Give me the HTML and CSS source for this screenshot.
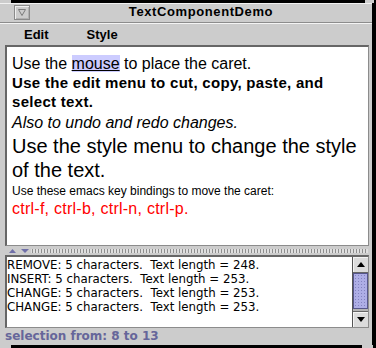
FILE: index.html
```html
<!DOCTYPE html>
<html lang="en">
<head>
    <meta charset="UTF-8">
    <title>TextComponentDemo</title>
    <link rel="stylesheet" href="styles.css">
</head>
<body>
<div class="window">
    <div class="titlebar">
        <div class="close-box">
            <svg width="8" height="7" viewBox="0 0 8 7"><path d="M0.5 0.5 H7.5 L4 6.5 Z" fill="none" stroke="#7a7a7a"/></svg>
        </div>
        <div class="title">TextComponentDemo</div>
    </div>

    <div class="menubar">
        <span class="menu edit">Edit</span>
        <span class="menu style">Style</span>
    </div>

    <div class="editor">
        <div class="line regular">Use the <span class="sel">mouse</span> to place the caret.</div>
        <div class="line bold">Use the edit menu to cut, copy, paste, and</div>
        <div class="line bold">select text.</div>
        <div class="line italic">Also to undo and redo changes.</div>
        <div class="line large">Use the style menu to change the style</div>
        <div class="line large">of the text.</div>
        <div class="line small">Use these emacs key bindings to move the caret:</div>
        <div class="line red">ctrl-f, ctrl-b, ctrl-n, ctrl-p.</div>
    </div>

    <div class="divider">
        <svg class="split-arrows" width="31" height="9" viewBox="0 0 31 9">
            <polygon points="9,7 16,7 12.5,3" fill="#6f6fa8"/>
            <polygon points="21,3 29,3 25,7" fill="#6f6fa8"/>
        </svg>
        <div class="grip"></div>
    </div>

    <div class="log-pane">
        <div class="log">
            <div>REMOVE: 5 characters.&nbsp; Text length = 248.</div>
            <div>INSERT: 5 characters.&nbsp; Text length = 253.</div>
            <div>CHANGE: 5 characters.&nbsp; Text length = 253.</div>
            <div>CHANGE: 5 characters.&nbsp; Text length = 253.</div>
        </div>
        <div class="scrollbar">
            <div class="sb-btn up">
                <svg width="8" height="5" viewBox="0 0 8 5"><polygon points="0,5 8,5 4,0" fill="#000"/></svg>
            </div>
            <div class="sb-thumb"></div>
            <div class="sb-track"></div>
            <div class="sb-btn down">
                <svg width="8" height="5" viewBox="0 0 8 5"><polygon points="0,0 8,0 4,5" fill="#000"/></svg>
            </div>
        </div>
    </div>

    <div class="status">selection from: 8 to 13</div>

    <div class="corner tl"></div>
    <div class="corner tr"></div>
    <div class="corner bl"></div>
    <div class="corner br"></div>
</div>
</body>
</html>
```

FILE: styles.css
```css
* {
    box-sizing: border-box;
}

html, body {
    margin: 0;
    padding: 0;
}

body {
    width: 376px;
    height: 348px;
    background: #000;
    overflow: hidden;
}

.window {
    position: relative;
    width: 372px;
    height: 342px;
    margin-top: 3px;
    background: #cccccc;
    display: flex;
    flex-direction: column;
    font-family: 'Liberation Sans', Arial, sans-serif;
}

/* title bar */

.titlebar {
    height: 20px;
    border-top: 1px solid #f2f2f2;
    border-bottom: 1px solid #8c8c8c;
    display: flex;
    align-items: flex-start;
    padding-left: 14px;
}

.close-box {
    width: 16px;
    height: 15px;
    margin-top: 1px;
    border: 1px solid #8a8a8a;
    box-shadow: inset 1px 1px 0 #f0f0f0, inset -1px -1px 0 #b0b0b0;
    display: flex;
    align-items: center;
    justify-content: center;
}

.title {
    flex: 1;
    text-align: center;
    font-weight: bold;
    font-size: 13px;
    line-height: 15px;
    letter-spacing: 0.6px;
    color: #000;
}

/* menu bar */

.menubar {
    height: 22px;
    border-top: 1px solid #f4f4f4;
    display: flex;
    font-weight: bold;
    font-size: 13px;
    line-height: 21px;
    color: #000;
}

.menu.edit {
    margin-left: 24px;
}

.menu.style {
    margin-left: 38px;
}

/* styled text */

.editor {
    height: 201px;
    margin: 0 3px 0 5px;
    background: #fff;
    border-top: 2px solid #666;
    border-left: 2px solid #666;
    border-right: 1px solid #8c8c8c;
    border-bottom: 1px solid #8c8c8c;
    padding: 7px 0 0 5px;
    overflow: hidden;
}

.line {
    white-space: nowrap;
    color: #000;
}

.regular {
    font-size: 16px;
    line-height: 19px;
}

.sel {
    background: #ccccff;
    text-decoration: underline;
}

.bold {
    font-weight: bold;
    font-size: 15px;
    line-height: 19px;
    letter-spacing: 0.3px;
}

.italic {
    font-style: italic;
    font-size: 16px;
    line-height: 23px;
}

.large {
    font-size: 20px;
    line-height: 24px;
}

.small {
    font-size: 12px;
    line-height: 18px;
}

.red {
    color: #ff0000;
    font-size: 16px;
    line-height: 17px;
    letter-spacing: 0.25px;
}

/* split pane divider */

.divider {
    height: 9px;
    display: flex;
    align-items: center;
}

.split-arrows {
    display: block;
    flex: none;
}

.grip {
    flex: 1;
    height: 4px;
    margin-right: 4px;
    background:
        radial-gradient(circle, #8e8e8e 0.6px, transparent 0.9px) 0 0 / 3px 2px,
        radial-gradient(circle, #f2f2f2 0.6px, transparent 0.9px) 1.5px 1px / 3px 2px;
}

/* event log */

.log-pane {
    height: 73px;
    margin: 0 3px 0 5px;
    border-top: 2px solid #666;
    border-left: 2px solid #666;
    border-right: 1px solid #8c8c8c;
    border-bottom: 1px solid #8c8c8c;
    display: flex;
}

.log {
    flex: 1;
    background: #fff;
    padding-top: 1px;
    font-family: 'DejaVu Sans', Verdana, sans-serif;
    font-size: 11.8px;
    line-height: 14px;
    color: #000;
    white-space: nowrap;
    overflow: hidden;
}

.scrollbar {
    width: 16px;
    border-left: 1px solid #555;
    display: flex;
    flex-direction: column;
    background: #b4b4b4;
}

.sb-btn {
    height: 16px;
    background: #dcdcdc;
    display: flex;
    align-items: center;
    justify-content: center;
    box-shadow: inset 1px 1px 0 #f4f4f4;
}

.sb-btn.up {
    border-bottom: 1px solid #666;
}

.sb-btn.down {
    border-top: 1px solid #666;
}

.sb-thumb {
    height: 36px;
    border: 1px solid #55558a;
    background:
        radial-gradient(circle, #8383c0 0.6px, transparent 0.9px) 0 0 / 3px 3px,
        #aeaee6;
}

.sb-track {
    height: 2px;
}

/* status line */

.status {
    height: 17px;
    padding-left: 5px;
    font-family: 'DejaVu Sans', Verdana, sans-serif;
    font-weight: bold;
    font-size: 12px;
    line-height: 17px;
    color: #66669a;
}

/* window frame corners */

.corner {
    position: absolute;
    height: 3px;
    background: #cccccc;
}

.corner.tl {
    top: -3px;
    left: 0;
    width: 11px;
}

.corner.tr {
    top: -3px;
    right: -2px;
    width: 9px;
}

.corner.bl {
    bottom: -3px;
    left: 0;
    width: 11px;
}

.corner.br {
    bottom: -3px;
    right: -1px;
    width: 11px;
}
```
